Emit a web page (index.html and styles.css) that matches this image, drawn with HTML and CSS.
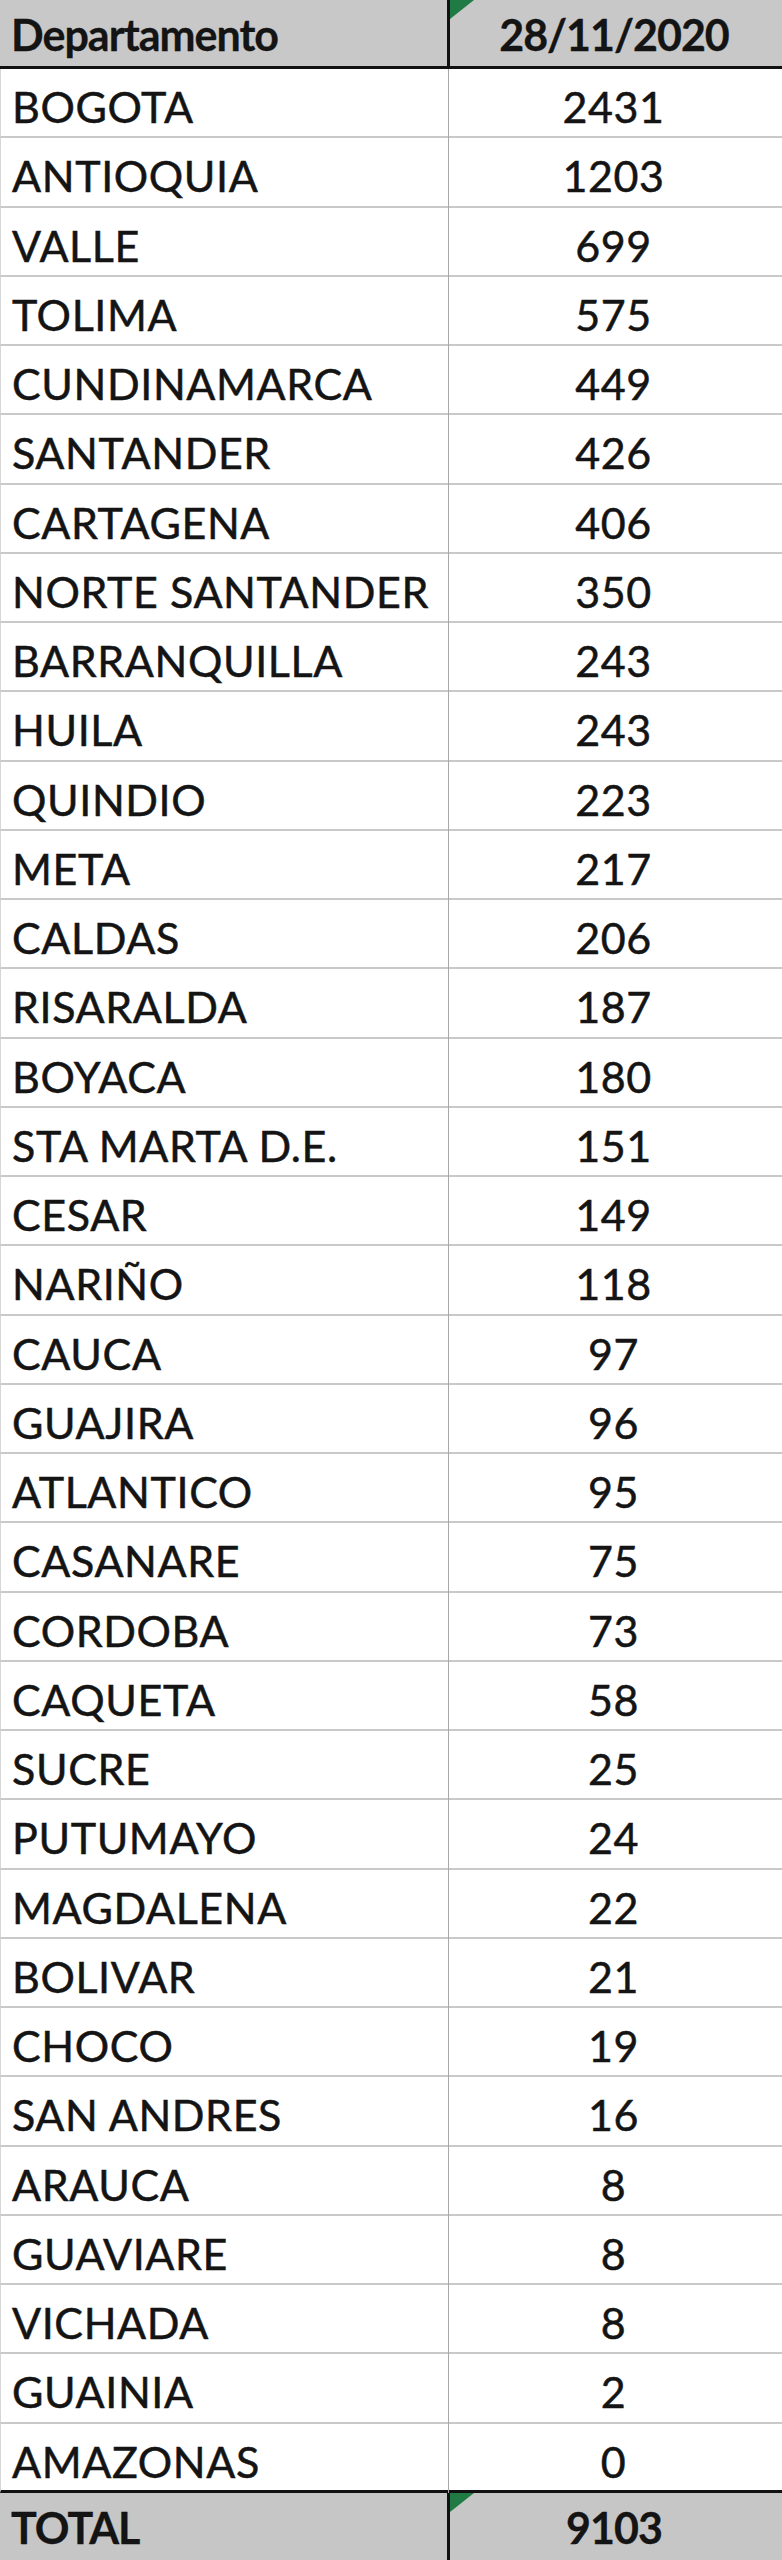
FILE: index.html
```html
<!DOCTYPE html>
<html lang="es">
<head>
<meta charset="utf-8">
<title>Casos por departamento</title>
<link rel="stylesheet" href="styles.css">
</head>
<body>
<div class="sheet">
  <div class="row head">
    <div class="cell name">Departamento</div>
    <div class="cell val flagged">28/11/2020</div>
  </div>
  <div class="row"><div class="cell name">BOGOTA</div><div class="cell val">2431</div></div>
  <div class="row"><div class="cell name">ANTIOQUIA</div><div class="cell val">1203</div></div>
  <div class="row"><div class="cell name">VALLE</div><div class="cell val">699</div></div>
  <div class="row"><div class="cell name">TOLIMA</div><div class="cell val">575</div></div>
  <div class="row"><div class="cell name">CUNDINAMARCA</div><div class="cell val">449</div></div>
  <div class="row"><div class="cell name">SANTANDER</div><div class="cell val">426</div></div>
  <div class="row"><div class="cell name">CARTAGENA</div><div class="cell val">406</div></div>
  <div class="row"><div class="cell name">NORTE SANTANDER</div><div class="cell val">350</div></div>
  <div class="row"><div class="cell name">BARRANQUILLA</div><div class="cell val">243</div></div>
  <div class="row"><div class="cell name">HUILA</div><div class="cell val">243</div></div>
  <div class="row"><div class="cell name">QUINDIO</div><div class="cell val">223</div></div>
  <div class="row"><div class="cell name">META</div><div class="cell val">217</div></div>
  <div class="row"><div class="cell name">CALDAS</div><div class="cell val">206</div></div>
  <div class="row"><div class="cell name">RISARALDA</div><div class="cell val">187</div></div>
  <div class="row"><div class="cell name">BOYACA</div><div class="cell val">180</div></div>
  <div class="row"><div class="cell name">STA MARTA D.E.</div><div class="cell val">151</div></div>
  <div class="row"><div class="cell name">CESAR</div><div class="cell val">149</div></div>
  <div class="row"><div class="cell name">NARIÑO</div><div class="cell val">118</div></div>
  <div class="row"><div class="cell name">CAUCA</div><div class="cell val">97</div></div>
  <div class="row"><div class="cell name">GUAJIRA</div><div class="cell val">96</div></div>
  <div class="row"><div class="cell name">ATLANTICO</div><div class="cell val">95</div></div>
  <div class="row"><div class="cell name">CASANARE</div><div class="cell val">75</div></div>
  <div class="row"><div class="cell name">CORDOBA</div><div class="cell val">73</div></div>
  <div class="row"><div class="cell name">CAQUETA</div><div class="cell val">58</div></div>
  <div class="row"><div class="cell name">SUCRE</div><div class="cell val">25</div></div>
  <div class="row"><div class="cell name">PUTUMAYO</div><div class="cell val">24</div></div>
  <div class="row"><div class="cell name">MAGDALENA</div><div class="cell val">22</div></div>
  <div class="row"><div class="cell name">BOLIVAR</div><div class="cell val">21</div></div>
  <div class="row"><div class="cell name">CHOCO</div><div class="cell val">19</div></div>
  <div class="row"><div class="cell name">SAN ANDRES</div><div class="cell val">16</div></div>
  <div class="row"><div class="cell name">ARAUCA</div><div class="cell val">8</div></div>
  <div class="row"><div class="cell name">GUAVIARE</div><div class="cell val">8</div></div>
  <div class="row"><div class="cell name">VICHADA</div><div class="cell val">8</div></div>
  <div class="row"><div class="cell name">GUAINIA</div><div class="cell val">2</div></div>
  <div class="row last"><div class="cell name">AMAZONAS</div><div class="cell val">0</div></div>
  <div class="row total">
    <div class="cell name">TOTAL</div>
    <div class="cell val flagged">9103</div>
  </div>
</div>
</body>
</html>
```
FILE: styles.css
```css
html, body {
  margin: 0;
  padding: 0;
  background: #ffffff;
}
.sheet {
  width: 782px;
  height: 2560px;
  overflow: hidden;
  display: flex;
  flex-direction: column;
  font-family: Lato, "Open Sans", "Liberation Sans", sans-serif;
  color: #141414;
}
.row {
  display: grid;
  grid-template-columns: 447px 1fr;
  box-sizing: border-box;
  height: 69.26px;
  border-bottom: 2px solid #c9c9c9;
  border-left: 1px solid #d6d6d6;
}
.cell {
  box-sizing: border-box;
  font-size: 43px;
  line-height: 67px;
  padding-top: 4px;
  white-space: nowrap;
  letter-spacing: 0.6px;
  -webkit-text-stroke: 0.5px #141414;
}
.name {
  padding-left: 11px;
}
.val {
  text-align: center;
  border-left: 1px solid #a8a8a8;
  position: relative;
  padding-right: 4px;
}
.row.head {
  height: 69px;
  background: #c8c8c8;
  border-bottom: 3px solid #111111;
  border-left: none;
}
.row.head .cell,
.row.total .cell {
  font-weight: bold;
  line-height: 66px;
  padding-top: 2px;
  letter-spacing: -1px;
  -webkit-text-stroke: 0.3px #111111;
}
.row.head .val,
.row.total .val {
  border-left: 3px solid #111111;
}
.row.last {
  border-bottom: 3px solid #111111;
}
.row.total {
  flex: 1;
  height: auto;
  background: #c6c6c6;
  border-bottom: none;
  border-left: none;
}
.flagged::before {
  content: "";
  position: absolute;
  left: 0;
  top: 0;
  width: 0;
  height: 0;
  border-top: 19px solid #1f7a43;
  border-right: 24px solid transparent;
}
```
